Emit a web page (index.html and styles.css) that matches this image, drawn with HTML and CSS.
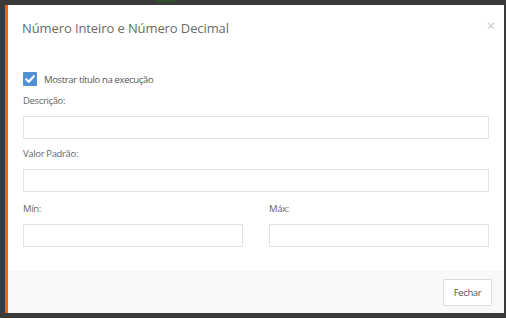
FILE: index.html
```html
<!DOCTYPE html>
<html lang="pt">
<head>
<meta charset="utf-8">
<link rel="stylesheet" href="styles.css">
</head>
<body>
<div class="topband"><span class="green"></span></div>
<div class="modal">
  <div class="header">
    <h1 class="title">Número Inteiro e Número Decimal</h1>
    <span class="close">×</span>
  </div>
  <div class="body">
    <label class="check">
      <span class="box"><svg width="14" height="14" viewBox="0 0 14 14"><path d="M3.2 7.2 L5.8 9.8 L10.8 4.2" fill="none" stroke="#fff" stroke-width="2.2" stroke-linecap="round" stroke-linejoin="round"/></svg></span>
      <span class="check-text">Mostrar título na execução</span>
    </label>
    <div class="field">
      <div class="label">Descrição:</div>
      <div class="input"></div>
    </div>
    <div class="field">
      <div class="label">Valor Padrão:</div>
      <div class="input"></div>
    </div>
    <div class="row">
      <div class="field">
        <div class="label">Mín:</div>
        <div class="input"></div>
      </div>
      <div class="field">
        <div class="label">Máx:</div>
        <div class="input"></div>
      </div>
    </div>
  </div>
  <div class="footer">
    <button class="btn">Fechar</button>
  </div>
</div>
</body>
</html>
```
FILE: styles.css
```css
html, body {
  margin: 0;
  padding: 0;
}
body {
  background: #3a3a3a;
  width: 506px;
  height: 318px;
  overflow: hidden;
  font-family: "Open Sans", "Noto Sans", sans-serif;
}
.topband {
  height: 5px;
  position: relative;
}
.green {
  position: absolute;
  left: 155px;
  top: 0;
  width: 20px;
  height: 2px;
  background: #2d4f2a;
}
.modal {
  margin-left: 5px;
  width: 499px;
  height: 308px;
  border-left: 3px solid #f0650e;
  box-sizing: border-box;
  background: #fff;
  display: flex;
  flex-direction: column;
}
.header {
  display: flex;
  justify-content: space-between;
  align-items: flex-start;
  padding: 13px 9px 0 14px;
  height: 57px;
  box-sizing: border-box;
}
.title {
  margin: 0;
  font-size: 13px;
  letter-spacing: -0.1px;
  font-weight: 400;
  color: #6a6a6a;
  line-height: 20px;
}
.close {
  color: #c8c8c8;
  font-size: 15px;
  line-height: 15px;
  margin-top: 0;
}
.body {
  padding: 10px 15px 0 15px;
  flex: 1;
  display: flex;
  flex-direction: column;
}
.check {
  display: flex;
  align-items: center;
  gap: 7px;
  height: 14px;
}
.box {
  width: 14px;
  height: 14px;
  background: #4f90d6;
  border-radius: 1px;
  display: block;
}
.box svg {
  display: block;
}
.check-text {
  font-size: 9.5px;
  letter-spacing: -0.35px;
  color: #555;
}
.field {
  display: flex;
  flex-direction: column;
}
.label {
  font-size: 9.5px;
  letter-spacing: -0.35px;
  color: #666;
  line-height: 14px;
  margin-top: 8px;
  margin-bottom: 8px;
}
.input {
  height: 23px;
  border: 1px solid #e3e3e3;
  box-sizing: border-box;
  background: #fff;
}
.row {
  display: grid;
  grid-template-columns: 220px 220px;
  column-gap: 26px;
}
.row .field .label {
  margin-top: 10px;
}
.footer {
  height: 42px;
  background: #f8f8f8;
  display: flex;
  justify-content: flex-end;
  align-items: flex-start;
  padding: 8px 12px 0 0;
  box-sizing: border-box;
}
.btn {
  width: 49px;
  height: 27px;
  border: 1px solid #dcdcdc;
  background: #fff;
  font-family: "Open Sans", "Noto Sans", sans-serif;
  font-size: 9.5px;
  letter-spacing: -0.35px;
  color: #555;
  padding: 0;
  border-radius: 1px;
}
```
